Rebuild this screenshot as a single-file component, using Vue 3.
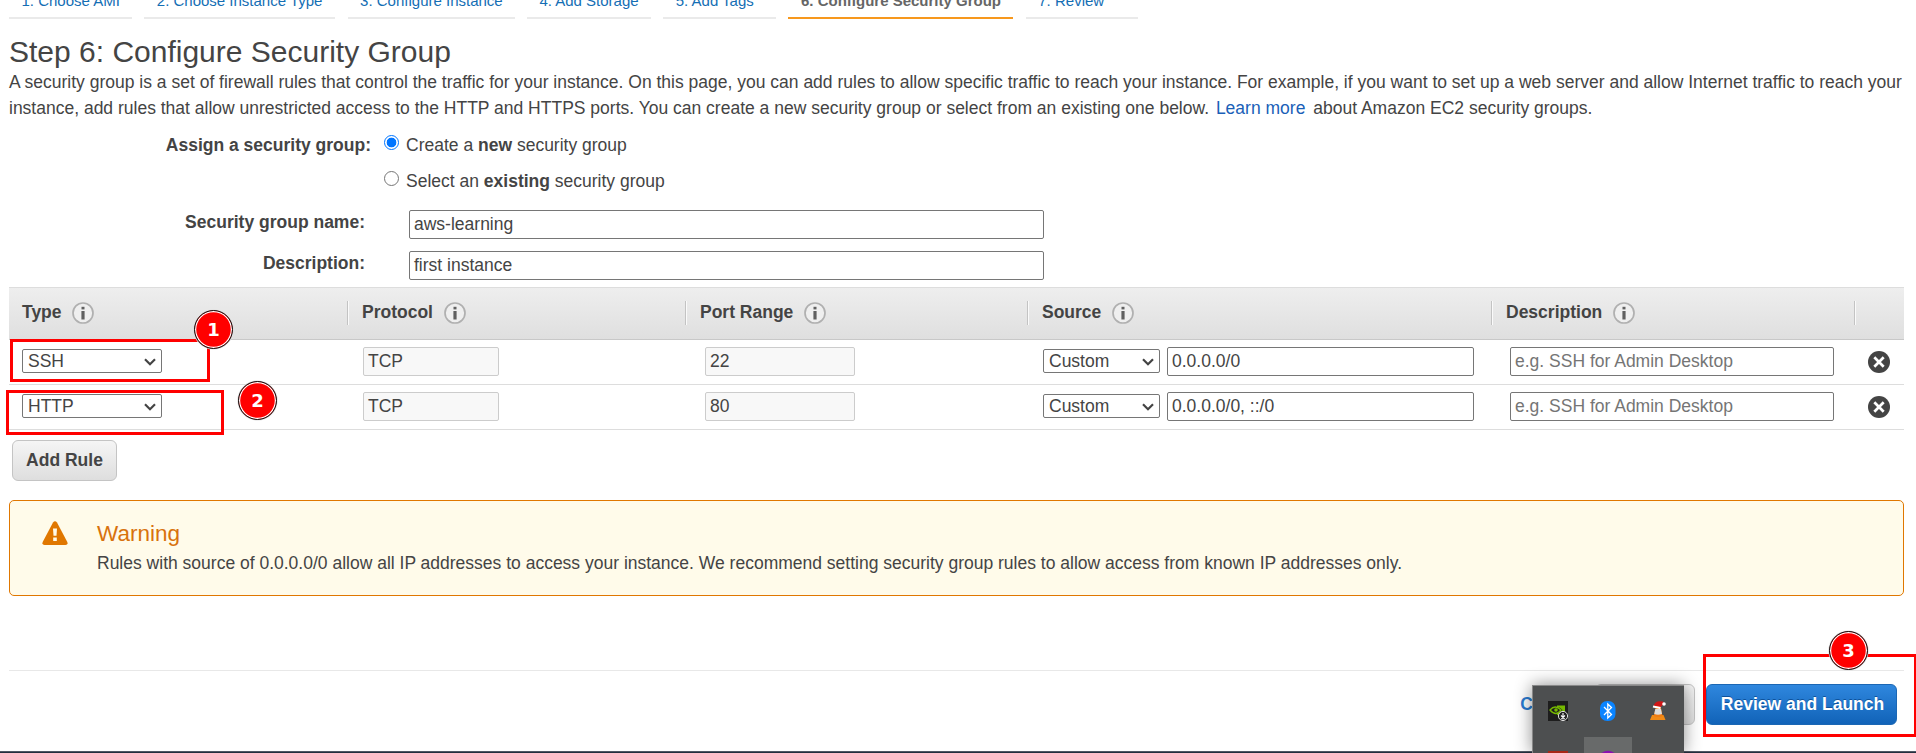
<script setup>
const tabs = [
  { label: '1. Choose AMI', width: 123 },
  { label: '2. Choose Instance Type', width: 191 },
  { label: '3. Configure Instance', width: 167 },
  { label: '4. Add Storage', width: 124 },
  { label: '5. Add Tags', width: 113 },
  { label: '6. Configure Security Group', width: 225, active: true },
  { label: '7. Review', width: 112 },
]
const columns = ['Type', 'Protocol', 'Port Range', 'Source', 'Description', '']
const rules = [
  { type: 'SSH', protocol: 'TCP', port: '22', source: '0.0.0.0/0' },
  { type: 'HTTP', protocol: 'TCP', port: '80', source: '0.0.0.0/0, ::/0' },
]
</script>

<template>
  <div class="page">
    <nav class="tabs">
      <div v-for="t in tabs" :key="t.label" class="tab" :class="{ active: t.active }" :style="{ width: t.width + 'px' }">{{ t.label }}</div>
    </nav>

    <h1>Step 6: Configure Security Group</h1>
    <div class="intro">
      <div class="line">A security group is a set of firewall rules that control the traffic for your instance. On this page, you can add rules to allow specific traffic to reach your instance. For example, if you want to set up a web server and allow Internet traffic to reach your</div>
      <div class="line">instance, add rules that allow unrestricted access to the HTTP and HTTPS ports. You can create a new security group or select from an existing one below. <a>Learn more</a> about Amazon EC2 security groups.</div>
    </div>

    <div class="assign">
      <b class="assign-label">Assign a security group:</b>
      <div class="choices">
        <label><i class="radio on"></i><span>Create a <b>new</b> security group</span></label>
        <label><i class="radio"></i><span>Select an <b>existing</b> security group</span></label>
      </div>
    </div>
    <div class="field"><b>Security group name:</b><div class="box">aws-learning</div></div>
    <div class="field"><b>Description:</b><div class="box">first instance</div></div>

    <div class="grid head">
      <div v-for="(c, i) in columns" :key="i" class="th">
        <template v-if="c">
          <span>{{ c }}</span>
          <svg width="22" height="22" viewBox="0 0 22 22"><circle cx="11" cy="11" r="10" fill="#efefef" stroke="#b0b0b0" stroke-width="1.7" /><path d="M11 9V17.500" stroke="#606060" stroke-width="3.2" /><path d="M11 4.800V7.400" stroke="#606060" stroke-width="3" /></svg>
        </template>
      </div>
    </div>
    <div v-for="r in rules" :key="r.type" class="grid row">
      <div class="cell type">
        <div class="select wide"><span>{{ r.type }}</span><svg width="12" height="8" viewBox="0 0 12 8"><path d="M1 1.3L6 6.2L11 1.3" fill="none" stroke="#444" stroke-width="2.2" /></svg></div>
      </div>
      <div class="cell proto"><div class="box off">{{ r.protocol }}</div></div>
      <div class="cell port"><div class="box off">{{ r.port }}</div></div>
      <div class="cell source">
        <div class="select"><span>Custom</span><svg width="12" height="8" viewBox="0 0 12 8"><path d="M1 1.3L6 6.2L11 1.3" fill="none" stroke="#444" stroke-width="2.2" /></svg></div>
        <div class="box">{{ r.source }}</div>
      </div>
      <div class="cell desc"><div class="box hint">e.g. SSH for Admin Desktop</div></div>
      <div class="cell del">
        <svg width="22" height="22" viewBox="0 0 22 22"><circle cx="11" cy="11" r="11" fill="#444" /><path d="M6.3 6.3L15.7 15.7M15.7 6.3L6.3 15.7" stroke="#fff" stroke-width="2.7" /></svg>
      </div>
    </div>

    <div class="btn add">Add Rule</div>

    <div class="warning">
      <svg width="26" height="24" viewBox="0 0 26 24"><path d="M11 1.6Q13 -1.2 15 1.6L25.3 21Q26.3 24 23.5 24H2.5Q-.3 24 .7 21Z" fill="#e07700" /><path d="M11 7.5H15L14.5 14.7H11.5Z M11.2 16.5H14.8V20H11.2Z" fill="#fffbea" /></svg>
      <div>
        <h2>Warning</h2>
        <p>Rules with source of 0.0.0.0/0 allow all IP addresses to access your instance. We recommend setting security group rules to allow access from known IP addresses only.</p>
      </div>
    </div>

    <footer>
      <b class="cancel">C</b>
      <div class="btn prev"></div>
      <div class="btn primary">Review and Launch</div>
    </footer>

    <div class="tray">
      <svg width="152" height="68" viewBox="0 0 152 68">
        <rect x="52" y="52" width="48" height="16" fill="#686a6a" />
        <rect x="16" y="16" width="20" height="20" fill="#1d1d1d" />
        <path d="M25 20.500H33V30H25V28Q29 28 30.500 25Q28 22 25 22Z" fill="#76b900" />
        <path d="M18 25Q23 19 29 25Q24 32 18 25Z" fill="none" stroke="#76b900" stroke-width="1.300" />
        <circle cx="24" cy="25" r="1.800" fill="#76b900" />
        <circle cx="31" cy="31" r="4.600" fill="#222" stroke="#ddd" stroke-width="1" />
        <path d="M31 28V32M29 30.500L31 32.500L33 30.500M29 33.700H33" fill="none" stroke="#fff" stroke-width="1.100" />
        <rect x="68" y="16" width="15.500" height="20" rx="7" fill="#0a84ff" />
        <path d="M72 22L79.500 29.500L75.800 33V19L79.500 22.500L72 30" fill="none" stroke="#fff" stroke-width="1.300" />
        <path d="M118 35L120 30H131.500L133.500 35Z" fill="#f28a16" />
        <path d="M121.800 31L124 21H128.500L130.500 31Q126 33 121.800 31Z" fill="#f07c12" />
        <path d="M123.300 24H129L130 29Q126 30.500 122.200 29Z" fill="#ddd" />
        <path d="M121.500 21Q123 15 131 16.500L132 19L128.500 22Z" fill="#d01616" />
        <path d="M121 21.500L128.500 23" stroke="#fff" stroke-width="2.200" />
        <circle cx="132" cy="19" r="1.800" fill="#fff" />
        <rect x="16" y="66" width="20" height="2" fill="#a82716" />
        <path d="M69.500 68Q76 63.500 82.500 68Z" fill="#8a0fb0" />
      </svg>
    </div>
    <div class="taskbar"></div>

    <div class="mark m1"></div>
    <div class="mark m2"></div>
    <div class="mark m3"></div>
    <div class="badge b1">1</div>
    <div class="badge b2">2</div>
    <div class="badge b3">3</div>
  </div>
</template>

<style>
body { margin: 0; overflow: hidden; background: #fff; }
</style>
<style scoped>
* { box-sizing: border-box; }
.page { position: relative; width: 1916px; height: 753px; overflow: hidden; padding: 0 12px 0 9px; font: 17.5px/26px "Liberation Sans", Arial, sans-serif; color: #444; white-space: nowrap; }
svg { display: block; flex: none; }
.tabs { display: flex; gap: 12.3px; height: 19px; }
.tab { display: flex; align-items: flex-end; flex: none; height: 19px; padding: 0 0 8px 12.5px; border-bottom: 2px solid #eaeaea; color: #146eb4; font-size: 15px; line-height: 17px; }
.tab.active { border-color: #f7981d; color: #666; font-weight: bold; }
h1 { margin: 15px 0 0; height: 35px; font-size: 30px; line-height: 36px; font-weight: normal; }
.intro { height: 55px; }
.line { height: 26px; }
a { color: #1a5fb8; margin: 0 3px 0 2px; }
.assign { display: flex; height: 86px; padding-top: 8px; }
.assign-label { width: 362px; text-align: right; }
.choices { padding-left: 13px; }
.choices label { display: flex; height: 36px; }
.radio { width: 15px; height: 15px; margin: 3px 7px 0 0; border: 1px solid #767676; border-radius: 50%; }
.radio.on { border: 1.5px solid #0075ff; background: radial-gradient(circle, #0075ff 0 4.5px, #fff 5.2px); }
.field { display: flex; height: 41px; }
.field > b { width: 356px; text-align: right; line-height: 25px; }
.field .box { width: 635px; margin-left: 44px; }
.box { height: 29px; border: 1px solid #767676; border-radius: 2px; padding-left: 4px; line-height: 27px; background: #fff; }
.box.off { background: #f8f8f8; border-color: #ccc; }
.box.hint { color: #757575; }
.grid { display: grid; grid-template-columns: 338px 338px 342px 464px 363px 50px; }
.head { margin-top: -5px; height: 53px; border-top: 1px solid #ddd; border-bottom: 1px solid #c8c8c8; background: linear-gradient(#eee, #dfdfdf); }
.th { display: flex; gap: 11px; margin: 13px 0 14px; height: 24px; padding-left: 14px; border-left: 1px solid #c3c3c3; box-shadow: inset 1px 0 #fafafa; font-weight: bold; line-height: 23px; }
.th:first-child { border-color: transparent; box-shadow: none; padding-left: 12px; gap: 10px; }
.th svg { margin-top: 1px; }
.row { height: 45px; border-bottom: 1px solid #ddd; }
.cell { display: flex; padding-top: 7px; }
.cell .box { line-height: 26px; }
.type { padding-left: 13px; }
.proto { padding-left: 16px; }
.proto .box { width: 136px; }
.port { padding-left: 20px; }
.port .box { width: 150px; }
.source { padding-left: 16px; gap: 7px; }
.source .box { width: 307px; }
.desc { padding-left: 19px; }
.desc .box { width: 324px; }
.del { padding: 11px 0 0 14px; }
.select { display: flex; align-items: center; justify-content: space-between; width: 117px; height: 24px; margin-top: 2px; padding: 0 5px; border: 1px solid #767676; border-radius: 2px; line-height: 22px; }
.select.wide { width: 140px; }
.select svg { margin-top: 2px; }
.btn { height: 41px; border: 1px solid #c4c4c4; border-radius: 6px; background: linear-gradient(#f5f5f5, #dedede); font-weight: bold; text-align: center; line-height: 38px; }
.add { width: 105px; margin: 10px 0 0 3px; }
.warning { display: flex; gap: 29px; height: 96px; margin-top: 19px; padding: 20px 0 0 32px; border: 1px solid #e07700; border-radius: 5px; background: #fffbea; }
h2 { margin: 0; font-weight: normal; color: #d8720d; font-size: 22.5px; line-height: 26px; }
p { margin: 3px 0 0; }
footer { display: flex; justify-content: flex-end; height: 60px; margin-top: 74px; padding: 13px 7px 0 0; border-top: 1px solid #e8e8e8; }
.cancel { color: #2a7bd0; line-height: 40px; margin-right: 62px; }
.prev { width: 100px; margin-right: 11px; }
.primary { width: 191px; padding-left: 2px; color: #fff; border-color: #1b67b4; background: linear-gradient(#2f87de, #1163b8); text-shadow: 0 -1px #0e529b; }
.tray { position: absolute; left: 1532px; top: 685px; width: 152px; height: 68px; border-top: 1px solid #888; border-left: 1px solid #888; background: #4d4f50; box-shadow: 0 0 16px rgba(0, 0, 0, .45); }
.tray svg { margin: -1px; }
.taskbar { position: absolute; left: 0; right: 0; top: 751px; height: 2px; border-top: 1px solid #515763; background: #232f3e; }
.tray { z-index: 1; }
.mark { position: absolute; border: 3px solid #f00; }
.m1 { left: 10px; top: 339px; width: 200px; height: 43px; }
.m2 { left: 6px; top: 390px; width: 218px; height: 45px; }
.m3 { left: 1703px; top: 654px; width: 214px; height: 83px; }
.badge { position: absolute; width: 39px; height: 39px; border: 1.5px solid #111; border-radius: 50%; background: #f00; box-shadow: inset 0 0 0 1.2px #fff, 0 0 0 .6px #ddd; color: #fff; font: bold 18px/37px "Noto Sans", "DejaVu Sans", sans-serif; font-family: "DejaVu Sans", sans-serif; text-align: center; }
.b1 { left: 194px; top: 310px; }
.b2 { left: 238px; top: 381px; }
.b3 { left: 1829px; top: 631px; }
</style>
